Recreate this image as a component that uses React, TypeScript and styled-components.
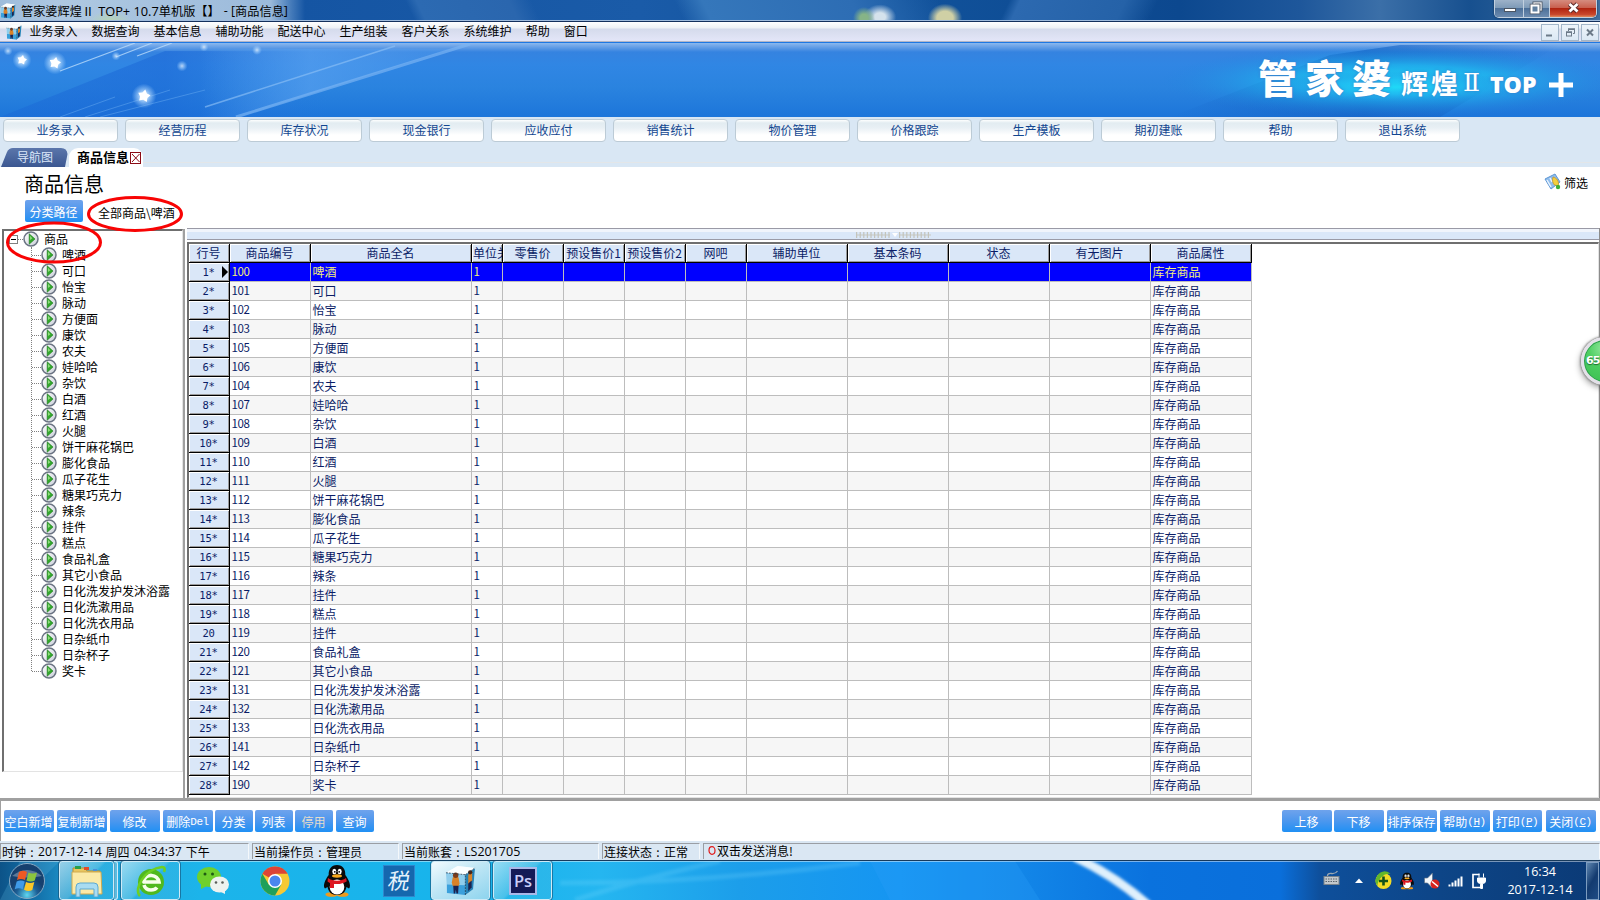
import React from "react";
import styled, { createGlobalStyle, css } from "styled-components";

const GlobalStyle = createGlobalStyle`
  * { box-sizing: border-box; }
  body { margin: 0; background: #fff; }
`;

const cjk = `"Noto Sans CJK SC", sans-serif`;
const ui = `"Open Sans", "Noto Sans CJK SC", sans-serif`;

const Screen = styled.div`
  position: relative;
  width: 1600px;
  height: 900px;
  overflow: hidden;
  display: flex;
  flex-direction: column;
  font: 12px/14px ${cjk};
  color: #000;
  white-space: nowrap;
`;

/* ---------- window frame ---------- */
const TitleBar = styled.header`
  height: 22px;
  flex: none;
  display: flex;
  align-items: flex-start;
  padding-right: 3px;
  border-bottom: 1px solid #14305c;
  box-shadow: inset 0 -1px 0 #9fbbdc;
  background:
    radial-gradient(ellipse 11px 11px at 864px 18px, #86b487 0 35%, transparent 100%),
    radial-gradient(ellipse 18px 14px at 880px 17px, #d5e2ec 0 30%, transparent 90%),
    radial-gradient(ellipse 18px 15px at 945px 18px, #cfd0a5 0 45%, transparent 95%),
    radial-gradient(ellipse 22px 10px at 110px 21px, rgba(190, 220, 160, .7), transparent 100%),
    linear-gradient(90deg, rgba(190, 212, 233, .8) 0, rgba(200, 219, 236, .85) 60px, rgba(190, 212, 233, .8) 270px, rgba(110, 155, 205, .5) 292px, transparent 305px),
    linear-gradient(65deg, transparent 376px, #2c6ab2 386px, #2a66ae 470px, transparent 490px),
    linear-gradient(65deg, transparent 620px, #3577bb 645px, #2d6db4 780px, transparent 860px),
    linear-gradient(115deg, transparent 915px, #2c69b0 925px, #2562a8 1020px, transparent 1050px),
    linear-gradient(90deg, #1b5fa5 0, #1555a3 300px, #1a5ba8 640px, #11529b 900px, #0c488f 1180px, #1e579b 1300px, #3b6fa8 1380px, #17508f 1470px, #406f9f 1600px);
`;
const TitleIcon = styled.div`
  width: 17px;
  margin-right: 4px;
  padding-top: 3px;
  height: 20px;
`;
const TitleText = styled.div`
  flex: 1;
  display: flex;
  font: 12.2px/20px ${cjk};
  padding-top: 1px;
`;
const Latin = styled.span<{ $size?: number; $left?: number }>`
  font-family: "Open Sans", sans-serif;
  font-size: ${(p) => p.$size ?? 12.5}px;
  margin-left: ${(p) => p.$left ?? 0}px;
`;
const Em = styled.span<{ $end?: boolean }>`
  width: 12.2px;
  display: flex;
  justify-content: ${(p) => (p.$end ? "flex-end" : "flex-start")};
  overflow: visible;
`;
const WinControls = styled.div`
  display: flex;
  height: 18px;
  border: 1px solid #c2d0df;
  border-top: 0;
  border-radius: 0 0 5px 5px;
  overflow: hidden;
  box-shadow: 0 0 2px #152a45;
`;
const WinButton = styled.div<{ $w: number; $close?: boolean }>`
  width: ${(p) => p.$w}px;
  display: flex;
  justify-content: center;
  background: ${(p) =>
    p.$close
      ? "linear-gradient(#d58c7f 0, #c9604e 45%, #b02410 50%, #c9472c 85%, #e08a5c)"
      : "linear-gradient(#9db2c9 0, #7f9bb8 45%, #4d7099 50%, #6d8cb0)"};
  & + & { border-left: 1px solid #c2d0df; }
`;
const MenuBar = styled.nav`
  height: 20px;
  flex: none;
  display: flex;
  align-items: center;
  padding: 0 1px 0 6px;
  background: linear-gradient(#fff 0, #eef1f5 6px, #d5dbec 7px, #e2e5f7 18px);
  border-bottom: 1px solid #b3b6c6;
  font: 12px/16px ${ui};
`;
const MenuIcon = styled.div`
  width: 18px;
  height: 16px;
  margin-right: 5.5px;
`;
const MenuItem = styled.span`
  margin-right: 14px;
`;
const MdiControls = styled.div`
  margin-left: auto;
  display: flex;
  gap: 2px;
  padding-top: 2px;
`;
const MdiButton = styled.div`
  width: 18px;
  height: 17px;
  border: 1px solid #a3b6c9;
  background: linear-gradient(#eef4fa, #dbe8f4);
  display: flex;
`;

/* ---------- banner ---------- */
const Banner = styled.section`
  height: 75px;
  flex: none;
  position: relative;
  border-top: 1px solid #1e78e4;
  background: linear-gradient(#8cb9ee 0, #6fa5e8 3px, #3583e0 9px, #3086e4 22px, #2a83df 45px, #1d76da 73px);
`;
const BannerArt = styled.svg`
  position: absolute;
  left: 0;
  top: 0;
`;
const Brand = styled.div`
  position: relative;
  height: 74px;
  padding-left: 1258px;
  display: flex;
  color: #fff;
  text-shadow: 0 0 3px #3c7ac8;
`;
const BrandPart = styled.span<{ $size: number; $top: number; $w: number; $gap?: number; $face?: string; $weight?: number }>`
  width: ${(p) => p.$w}px;
  font: ${(p) => p.$weight ?? 700} ${(p) => p.$size}px/${(p) => p.$size}px ${(p) => p.$face ?? cjk};
  margin-top: ${(p) => p.$top}px;
  letter-spacing: ${(p) => p.$gap ?? 0}px;
`;

/* ---------- shortcut band ---------- */
const Band = styled.section`
  height: 50px;
  flex: none;
  background: #d9e7f4;
  display: flex;
  flex-direction: column;
  justify-content: space-between;
`;
const Shortcuts = styled.div`
  display: flex;
  gap: 7px;
  padding: 2px 0 0 3px;
`;
const Shortcut = styled.div`
  width: 115px;
  height: 23px;
  border: 1px solid #bccbd6;
  border-radius: 4px;
  background: linear-gradient(#fdfefe 0, #e2ecf1 3px, #e9f0f5 8px, #fff 15px);
  color: #124690;
  text-align: center;
  line-height: 20px;
`;
const Tabs = styled.div`
  height: 19px;
  display: flex;
  padding-left: 1px;
`;
const InactiveTab = styled.div`
  width: 68px;
  position: relative;
  color: #dce8fa;
  text-align: center;
  line-height: 18px;
`;
const TabShape = styled.svg`
  position: absolute;
  left: 0;
  top: 0;
`;
const TabLabel = styled.span`
  position: relative;
`;
const ActiveTab = styled.div`
  width: 74px;
  display: flex;
  align-items: center;
  padding: 0 0 2px 8px;
  font-weight: 700;
  font-size: 13px;
  background: #fff;
  border-radius: 9px 9px 0 0;
`;
const TabClose = styled.svg`
  flex: none;
  margin: 2px 0 0 1px;
`;
const TabRest = styled.div`
  flex: 1;
  border-top: 1px solid #e3e6e8;
  margin-top: 14px;
`;

/* ---------- page head ---------- */
const PageHead = styled.section`
  height: 61px;
  flex: none;
  display: flex;
  justify-content: space-between;
  padding: 6px 11px 0 24px;
`;
const HeadLeft = styled.div`
  display: flex;
  flex-direction: column;
`;
const PageTitle = styled.h1`
  margin: 0;
  font: 400 20px/22px ${cjk};
  height: 27px;
`;
const PathRow = styled.div`
  display: flex;
  align-items: center;
  padding-left: 1px;
`;
const BlueButton = styled.button<{ $w: number; $ml?: number; $dim?: boolean }>`
  width: ${(p) => p.$w}px;
  height: 22px;
  margin: 0 0 0 ${(p) => p.$ml ?? 0}px;
  padding: 3px 1px 0 0;
  border: 0;
  border-radius: 2px;
  background: linear-gradient(#6fa3ec 0, #4c97ee 50%, #2090f4 100%);
  font: 12px/18px ${cjk};
  color: ${(p) => (p.$dim ? "#e5dccb" : "#fff")};
  text-align: center;
  white-space: nowrap;
  overflow: hidden;
  display: flex;
  align-items: flex-start;
  justify-content: center;
`;
const Hot = styled.span`
  font: 11px/19px "Liberation Mono", monospace;
  letter-spacing: -0.4px;
`;
const PathText = styled.span`
  margin-left: 15px;
  padding-top: 4px;
`;
const Filter = styled.div`
  display: flex;
  gap: 3px;
  padding-right: 1px;
  height: 20px;
  line-height: 20px;
`;

/* ---------- workspace ---------- */
const Workspace = styled.main`
  height: 573px;
  flex: none;
  display: flex;
  border-bottom: 3px solid #a0a0a0;
`;
const TreePane = styled.aside`
  width: 187px;
  padding: 1px 0 0 2px;
  border-right: 2px solid #fff;
  display: flex;
`;
const TreeColumn = styled.div`
  width: 181px;
`;
const TreeEdge = styled.div`
  width: 2px;
  background: #a0a0a0;
`;
const Tree = styled.div`
  height: 543px;
  border: 1px solid #e3e3e3;
  border-top: 2px solid #6f6f6f;
  border-left: 2px solid #6f6f6f;
`;
const TreeRoot = styled.div`
  height: 16px;
  display: flex;
  align-items: center;
  padding-left: 5px;
`;
const TreeChildren = styled.div`
  margin-left: 27px;
  height: 424px;
  border-left: 1px dotted #808080;
`;
const TreeItem = styled.div`
  height: 16px;
  display: flex;
  align-items: center;
`;
const Branch = styled.span<{ $w: number }>`
  width: ${(p) => p.$w}px;
  border-top: 1px dotted #808080;
`;
const NodeText = styled.span`
  margin-left: 5px;
  line-height: 16px;
`;
const GridPane = styled.div`
  flex: 1;
  min-width: 0;
  display: flex;
  flex-direction: column;
  border-right: 1px solid #8c8c8c;
`;
const Splitter = styled.div`
  height: 12px;
  display: flex;
  border-top: 1px solid #9a9aa6;
  border-bottom: 1px solid #9a9aa6;
  box-shadow: inset 0 3px 0 #f0f4fb;
  background: #dae7f8;
  padding: 3px 0 0 669px;
`;
const GridFrame = styled.div`
  margin-top: 2px;
  height: 556px;
  border: 1px solid #e3e3e3;
  border-top: 2px solid #6f6f6f;
  border-left: 2px solid #6f6f6f;
`;
const columns = "41px 81px 161px 31px 61px 61px 61px 61px 101px 101px 101px 101px 101px";
const bevel = css`
  background: #dae7f8;
  box-shadow: inset 1px 1px 0 #fff, inset -1px -1px 0 #9a9a9a;
  border-right: 1px solid #000;
  border-bottom: 1px solid #000;
`;
const HeaderRow = styled.div`
  display: grid;
  grid-template-columns: ${columns};
  height: 19px;
  width: 1063px;
`;
const HeaderCell = styled.div<{ $clip?: boolean }>`
  ${bevel}
  color: #0a1c66;
  text-align: ${(p) => (p.$clip ? "left" : "center")};
  padding: 0 ${(p) => (p.$clip ? 0 : 1)}px 0 ${(p) => (p.$clip ? 1 : 0)}px;
  line-height: 18px;
  overflow: hidden;
`;
const DataRow = styled.div<{ $on: boolean; $even: boolean }>`
  display: grid;
  grid-template-columns: ${columns};
  height: 19px;
  width: 1063px;
  color: ${(p) => (p.$on ? "#f3ee7a" : "#0a1c66")};
  background: ${(p) => (p.$on ? "#00f" : p.$even ? "#f6f6f6" : "#fff")};
`;
const RowNumber = styled.div`
  ${bevel}
  color: #0a1c66;
  font: 10.5px/18px "DejaVu Sans Mono", monospace;
  letter-spacing: -0.2px;
  display: grid;
  grid-template-columns: 9px 21px 10px;
  align-items: center;
  justify-items: center;
`;
const Cell = styled.div`
  border-right: 1px solid #bdbdbd;
  border-bottom: 1px solid #bdbdbd;
  padding-left: 1.5px;
  line-height: 17px;
  overflow: hidden;
`;
const NumCell = styled(Cell)`
  font-size: 11.5px;
  letter-spacing: -0.35px;
`;

/* ---------- footer ---------- */
const ButtonBar = styled.section`
  height: 40px;
  flex: none;
  display: flex;
  align-items: flex-start;
  padding: 9px 4px 0 3px;
  border-left: 1px solid #a0a0a0;
`;
const Push = styled.div`
  flex: 1;
`;
const StatusBar = styled.footer`
  height: 19px;
  flex: none;
  display: flex;
  gap: 3px;
  padding: 2px 0 1px;
  background: #dae7f3;
  font: 12px/15px ${cjk};
`;
const StatusPanel = styled.div<{ $w?: number; $plain?: boolean }>`
  ${(p) => (p.$w ? `width: ${p.$w}px` : "flex: 1")};
  border-top: 1px solid #9a9ea4;
  border-left: 1px solid #9a9ea4;
  border-right: 1px solid #f4f8fb;
  padding-left: ${(p) => (p.$plain ? 4 : 1)}px;
  line-height: ${(p) => (p.$plain ? 13 : 15)}px;
  display: flex;
  align-items: flex-start;
`;
const Colon = styled.span`
  width: 12px;
  text-align: center;
`;

/* ---------- taskbar ---------- */
const Taskbar = styled.footer`
  height: 40px;
  flex: none;
  position: relative;
  border-top: 1px solid #173a5c;
  background: linear-gradient(90deg, #0c5388 0, #1474ad 40px, #23a6dc 85px, #1cb4ea 200px, #17b4ec 480px, #25b6f0 600px, #1c9eea 740px, #1595f2 900px, #1286e8 1020px, #0a72de 1150px, #0a6fdb 1280px, #0e4f9b 1320px, #0d4587 1440px, #0b3a76 1600px);
`;
const TaskbarArt = styled.svg`
  position: absolute;
  left: 0;
  top: 0;
`;
const TaskbarRow = styled.div`
  position: relative;
  height: 39px;
  display: flex;
  align-items: stretch;
  box-shadow: inset 0 1px 0 rgba(255, 255, 255, .45);
`;
const TaskSlot = styled.div<{ $w: number; $ml?: number; $open?: boolean; $active?: boolean }>`
  width: ${(p) => p.$w}px;
  margin-left: ${(p) => p.$ml ?? 0}px;
  display: flex;
  align-items: center;
  justify-content: center;
  ${(p) =>
    p.$open &&
    css`
      border: 1px solid #cfeaf6;
      outline: 1px solid rgba(20, 70, 105, .55);
      outline-offset: -0.5px;
      border-radius: 3px;
      background: ${p.$active
        ? "linear-gradient(150deg, #f2fbfe, #bfe6f5 45%, #8dd4ee)"
        : "linear-gradient(135deg, rgba(205,238,248,.7), rgba(120,205,232,.5) 48%, rgba(60,185,228,.4) 52%)"};
    `}
`;
const StackEdge = styled.div`
  width: 4px;
  border: 1px solid #cfeaf6;
  border-left: 0;
  border-radius: 0 3px 3px 0;
  background: rgba(130, 200, 225, .6);
`;
const Tray = styled.div`
  margin-left: auto;
  display: flex;
  align-items: center;
`;
const Clock = styled.div`
  width: 84px;
  margin-left: 9px;
  color: #fff;
  font: 12.5px/18px ${ui};
  text-align: center;
`;
const ShowDesktop = styled.div`
  width: 13px;
  height: 38px;
  margin: 0 1px 0 4px;
  border: 1px solid #7c9cc0;
  background: linear-gradient(120deg, #5f86b0, #133b70 50%, #1f4c85);
`;

/* ---------- marks over the page ---------- */
const Marks = styled.svg`
  position: absolute;
  left: 0;
  top: 190px;
`;
const Ball = styled.div`
  position: absolute;
  left: 1581px;
  top: 337px;
  width: 48px;
  height: 48px;
  border-radius: 50%;
  border: 3px solid #e3e0e8;
  background: radial-gradient(circle at 45% 20%, #8fe59a 0, #4fcf63 35%, #39bd4e 100%);
  box-shadow: 0 0 2px 1px #8d8d8d, -1px 3px 6px rgba(0, 0, 0, .35), inset 0 0 0 1px #2c9a4c;
  color: #fff;
  font: 700 11px/42px "DejaVu Sans", sans-serif;
  padding-left: 2px;
  letter-spacing: -0.8px;
  text-shadow: 0 1px 1px #1d6b2c;
`;

/* ---------- drawings ---------- */
const CubeIcon = ({ size = 17 }: { size?: number }) => (
  <svg width={size} height={size} viewBox="0 0 32 32">
    <path d="M1 8 13 1 31 3 29 25 21 31 2 29Z" fill="#eaf6fc" />
    <path d="M1 8 21 10 21 31 2 29Z" fill="#8fcdec" />
    <path d="M2 20 21 21V31L2 29Z" fill="#3aa0dc" />
    <path d="M21 10 31 3 29 25 21 31Z" fill="#2583b8" />
    <path d="M1 8 13 1 31 3 21 10Z" fill="#fbfeff" />
    <path d="M8 13q3-3 6 0l1 6-1 3H8l-1-4Z" fill="#d98228" />
    <path d="M24 10l4-3v9l-4 4Z" fill="#d98228" />
    <path d="M8.500 21.500h5.500l-.5 8h-1.700l-.6-4-.7 4H9Z" fill="#1b2350" />
    <path d="M24 19l3.500-3v7L24 27Z" fill="#1b2350" />
    <circle cx="11" cy="10.500" r="2.800" fill="#7d3d1c" />
    <circle cx="26" cy="7.500" r="2.200" fill="#4a2414" />
    <path d="M1 8 21 10V31M21 10 31 3" fill="none" stroke="#16354c" strokeWidth=".8" strokeDasharray="2 1" />
  </svg>
);

const PlayIcon = () => (
  <svg width="16" height="16" viewBox="0 0 16 16">
    <defs>
      <linearGradient id="pl" x1="0" x2="1" y1="0" y2="1">
        <stop offset="0" stopColor="#fff" />
        <stop offset="1" stopColor="#c9ced8" />
      </linearGradient>
    </defs>
    <circle cx="8" cy="8" r="7" fill="url(#pl)" stroke="#6b7484" strokeWidth="1.500" />
    <path d="M6.200 2.800 12 8 6.200 13.200Z" fill="#33a82c" stroke="#1c7a1c" strokeWidth=".6" />
    <path d="M7 4.800 9.400 7.300 7 9Z" fill="#8fdc7c" />
  </svg>
);

const Penguin = ({ w, h }: { w: number; h: number }) => (
  <svg width={w} height={h} viewBox="0 0 28 32">
    <ellipse cx="8.500" cy="29.500" rx="6" ry="2.300" fill="#f09a1a" />
    <ellipse cx="19.500" cy="29.500" rx="6" ry="2.300" fill="#f09a1a" />
    <path d="M14 0C8 0 5.500 4.500 5.700 10 2 15 0 20 1.500 23c1 1 2-.5 3-1 1 5 4 8 9.500 8s8.500-3 9.500-8c1 .5 2 2 3 1C28 20 26 15 22.300 10 22.500 4.500 20 0 14 0Z" fill="#0a0a0a" />
    <ellipse cx="14" cy="22" rx="7.300" ry="7.500" fill="#fff" />
    <ellipse cx="11.300" cy="6.500" rx="2" ry="2.700" fill="#fff" />
    <ellipse cx="16.700" cy="6.500" rx="2" ry="2.700" fill="#fff" />
    <circle cx="11.800" cy="6.800" r=".9" />
    <circle cx="16.200" cy="6.800" r=".9" />
    <ellipse cx="14" cy="11" rx="5" ry="1.700" fill="#f7a81c" />
    <path d="M5 13c5 3.500 13 3.500 18 0l.8 3.300C19 20 9 20 4.500 16.500Z" fill="#dd1620" />
    <path d="M7 17.500h4v5.500H7z" fill="#dd1620" />
  </svg>
);

const shortcuts = ["业务录入", "经营历程", "库存状况", "现金银行", "应收应付", "销售统计", "物价管理", "价格跟踪", "生产模板", "期初建账", "帮助", "退出系统"];
const menus = ["业务录入", "数据查询", "基本信息", "辅助功能", "配送中心", "生产组装", "客户关系", "系统维护", "帮助", "窗口"];
const tree = ["啤酒", "可口", "怡宝", "脉动", "方便面", "康饮", "农夫", "娃哈哈", "杂饮", "白酒", "红酒", "火腿", "饼干麻花锅巴", "膨化食品", "瓜子花生", "糖果巧克力", "辣条", "挂件", "糕点", "食品礼盒", "其它小食品", "日化洗发护发沐浴露", "日化洗漱用品", "日化洗衣用品", "日杂纸巾", "日杂杯子", "奖卡"];
const heads = ["行号", "商品编号", "商品全名", "单位关", "零售价", "预设售价1", "预设售价2", "网吧", "辅助单位", "基本条码", "状态", "有无图片", "商品属性"];
const goods: [string, string][] = [
  ["100", "啤酒"], ["101", "可口"], ["102", "怡宝"], ["103", "脉动"], ["105", "方便面"], ["106", "康饮"], ["104", "农夫"],
  ["107", "娃哈哈"], ["108", "杂饮"], ["109", "白酒"], ["110", "红酒"], ["111", "火腿"], ["112", "饼干麻花锅巴"], ["113", "膨化食品"],
  ["114", "瓜子花生"], ["115", "糖果巧克力"], ["116", "辣条"], ["117", "挂件"], ["118", "糕点"], ["119", "挂件"], ["120", "食品礼盒"],
  ["121", "其它小食品"], ["131", "日化洗发护发沐浴露"], ["132", "日化洗漱用品"], ["133", "日化洗衣用品"], ["141", "日杂纸巾"],
  ["142", "日杂杯子"], ["190", "奖卡"],
];
const stars: [number, number, number][] = [[22, 17, 5], [55, 20, 6], [144, 53, 6.5]];
const dots: [number, number, number][] = [[8, 8, 3], [116, 13, 3], [182, 23, 4], [204, 4, 3], [257, 7, 3.5]];

const starPath = (x: number, y: number, r: number) =>
  Array.from({ length: 10 }, (_, i) => {
    const a = (i * Math.PI) / 5 - Math.PI / 2 + 0.2;
    const q = i % 2 ? r * 0.6 : r;
    return `${(x + q * Math.cos(a)).toFixed(1)},${(y + q * Math.sin(a)).toFixed(1)}`;
  }).join(" ");

export default function App() {
  return (
    <>
      <GlobalStyle />
      <Screen>
        <TitleBar>
          <TitleIcon><CubeIcon size={16} /></TitleIcon>
          <TitleText>
            管家婆辉煌<Em>Ⅱ</Em><Latin $left={4} $size={12.8}>TOP+ 10.7</Latin>单机版<Em $end>【</Em><Em>】</Em>
            <Latin $left={4}>- [</Latin>商品信息<Latin>]</Latin>
          </TitleText>
          <WinControls>
            <WinButton $w={28}>
              <svg width="27" height="17"><rect x="8.500" y="8.500" width="11" height="3" fill="#fff" stroke="#4b5563" /></svg>
            </WinButton>
            <WinButton $w={26}>
              <svg width="25" height="17">
                <rect x="10" y="3" width="7" height="7" fill="none" stroke="#4b5563" strokeWidth="3" />
                <rect x="10" y="3" width="7" height="7" fill="none" stroke="#fff" strokeWidth="1.300" />
                <rect x="7.500" y="5.500" width="7" height="7" fill="#5f7f9f" stroke="#4b5563" strokeWidth="3.500" />
                <rect x="7.500" y="5.500" width="7" height="7" fill="#5f7f9f" stroke="#fff" strokeWidth="2" />
              </svg>
            </WinButton>
            <WinButton $w={47} $close>
              <svg width="46" height="17">
                <path d="M19.500 4l8 7.500M27.500 4l-8 7.500" stroke="#5a2a2a" strokeWidth="4.600" />
                <path d="M19.500 4l8 7.500M27.500 4l-8 7.500" stroke="#fff" strokeWidth="2.800" />
              </svg>
            </WinButton>
          </WinControls>
        </TitleBar>

        <MenuBar>
          <MenuIcon><CubeIcon size={16} /></MenuIcon>
          {menus.map((m) => <MenuItem key={m}>{m}</MenuItem>)}
          <MdiControls>
            <MdiButton><svg width="16" height="15"><path d="M4 10.500h6" stroke="#6c7a88" strokeWidth="2" /></svg></MdiButton>
            <MdiButton>
              <svg width="16" height="15" fill="none" stroke="#6c7a88">
                <path d="M6.500 6V4.500h6v4H11" /><path d="M6 4h7" strokeWidth="1.500" /><rect x="4.500" y="7.500" width="5" height="3.500" /><path d="M4 7h6" strokeWidth="1.500" />
              </svg>
            </MdiButton>
            <MdiButton><svg width="16" height="15"><path d="M5 4.500l6 6M11 4.500l-6 6" stroke="#6c7a88" strokeWidth="2" /></svg></MdiButton>
          </MdiControls>
        </MenuBar>

        <Banner>
          <BannerArt width="1600" height="74">
            <defs>
              <radialGradient id="glow"><stop offset="0" stopColor="#1fd9f7" /><stop offset=".45" stopColor="#20bdf2" stopOpacity=".75" /><stop offset="1" stopColor="#2083dd" stopOpacity="0" /></radialGradient>
              <radialGradient id="halo"><stop offset="0" stopColor="#fff" /><stop offset=".4" stopColor="#bfe0ff" stopOpacity=".75" /><stop offset="1" stopColor="#9fd0ff" stopOpacity="0" /></radialGradient>
              <linearGradient id="dark" x1="0" x2="1"><stop offset="0" stopColor="#1a66d6" stopOpacity=".4" /><stop offset=".5" stopColor="#1a66d6" stopOpacity=".55" /><stop offset="1" stopColor="#2a78e0" stopOpacity="0" /></linearGradient>
              <linearGradient id="beam" gradientUnits="userSpaceOnUse" x1="200" x2="420" y1="0" y2="0"><stop offset="0" stopColor="#5aa2f0" stopOpacity="0" /><stop offset=".5" stopColor="#5aa2f0" stopOpacity=".65" /><stop offset="1" stopColor="#5aa2f0" stopOpacity=".35" /></linearGradient>
              <linearGradient id="shade" x1="0" x2="1"><stop offset="0" stopColor="#1561c4" stopOpacity="0" /><stop offset=".5" stopColor="#1561c4" stopOpacity=".7" /><stop offset="1" stopColor="#1561c4" stopOpacity="0" /></linearGradient>
            </defs>
            <path d="M0 74 165 8H330V74Z" fill="url(#dark)" />
            <path d="M190 74V6H450L240 74Z" fill="url(#beam)" />
            <path d="M205 64 395 3" stroke="#8cc0f6" strokeWidth="1.500" opacity=".65" />
            <path d="M236 74 470 1" stroke="#7db6f4" strokeWidth="3" opacity=".65" />
            <path d="M60 28 135 0M116 14 152 0M137 13 172 0" stroke="#b9dbfb" strokeWidth="1.200" opacity=".8" />
            <path d="M60 74 115 54M85 74 170 47M100 74 205 47" stroke="#6fb0f2" opacity=".45" />
            <path d="M1170 74 1330 12 1400 2H1560L1440 74Z" fill="url(#shade)" />
            <ellipse cx="1395" cy="38" rx="235" ry="36" fill="url(#glow)" />
            <ellipse cx="1395" cy="44" rx="130" ry="16" fill="url(#glow)" />
            {dots.map(([x, y, r]) => <circle key={x} cx={x} cy={y} r={r + 1.500} fill="url(#halo)" opacity=".7" />)}
            {stars.map(([x, y, r]) => (
              <g key={x}><circle cx={x} cy={y} r={r * 1.900} fill="url(#halo)" /><polygon points={starPath(x, y, r)} fill="#fff" /></g>
            ))}
          </BannerArt>
          <Brand>
            <BrandPart $size={39} $top={14} $w={143} $gap={8} $weight={900}>管家婆</BrandPart>
            <BrandPart $size={27} $top={26} $w={62} $gap={3}>辉煌</BrandPart>
            <BrandPart $size={25} $top={27} $w={27} $face={`"DejaVu Serif", serif`} $weight={400}>Ⅱ</BrandPart>
            <BrandPart $size={23} $top={30} $w={50} $face={`"Open Sans", sans-serif`} $weight={800}>TOP</BrandPart>
            <svg width="40" height="74"><path d="M9 42h24M21 30v24" stroke="#fff" strokeWidth="5" /></svg>
          </Brand>
        </Banner>

        <Band>
          <Shortcuts>{shortcuts.map((s) => <Shortcut key={s}>{s}</Shortcut>)}</Shortcuts>
          <Tabs>
            <InactiveTab>
              <TabShape width="68" height="19">
                <defs><linearGradient id="tb" x1="0" x2="0" y1="0" y2="1"><stop offset="0" stopColor="#5b76ab" /><stop offset="1" stopColor="#3b5791" /></linearGradient></defs>
                <path d="M0 19 6 4Q8 0 12 0H60Q66 0 66.500 6L64 19Z" fill="url(#tb)" />
              </TabShape>
              <TabLabel>导航图</TabLabel>
            </InactiveTab>
            <ActiveTab>
              商品信息
              <TabClose width="12" height="12"><rect x=".5" y=".5" width="10" height="11" fill="#fff" stroke="#8b0a14" /><path d="M2 2l7.500 8M9.500 2 2 10" stroke="#8b0a14" /></TabClose>
            </ActiveTab>
            <TabRest />
          </Tabs>
        </Band>

        <PageHead>
          <HeadLeft>
            <PageTitle>商品信息</PageTitle>
            <PathRow>
              <BlueButton $w={58}>分类路径</BlueButton>
              <PathText>全部商品\啤酒</PathText>
            </PathRow>
          </HeadLeft>
          <Filter>
            <svg width="17" height="17" viewBox="0 0 17 17">
              <path d="M1 6 11 1l5 8-9 7Z" fill="#8fbdec" stroke="#5f97d4" />
              <path d="M3 7l4 7M6 5l2 4" stroke="#e9f4ff" strokeWidth="1.500" />
              <path d="M9 4c4 1 6 4 5.500 9l-4-1C8.500 10 8 7 9 4Z" fill="#f3cf3f" stroke="#c58f1c" strokeWidth=".7" />
              <circle cx="14" cy="14" r="2.200" fill="#3fae3a" />
            </svg>
            筛选
          </Filter>
        </PageHead>

        <Workspace>
          <TreePane>
            <TreeColumn>
              <Tree>
                <TreeRoot>
                  <svg width="9" height="9"><rect x=".5" y=".5" width="8" height="8" fill="#fff" stroke="#808080" /><path d="M2 4.500h5" stroke="#000" /></svg>
                  <Branch $w={5} />
                  <PlayIcon />
                  <NodeText>商品</NodeText>
                </TreeRoot>
                <TreeChildren>
                  {tree.map((t) => (
                    <TreeItem key={t}><Branch $w={9} /><PlayIcon /><NodeText>{t}</NodeText></TreeItem>
                  ))}
                </TreeChildren>
              </Tree>
            </TreeColumn>
            <TreeEdge />
          </TreePane>
          <GridPane>
            <Splitter>
              <svg width="76" height="6">
                <path d="M0 3h34M43 3h32" stroke="#c9c9c0" /><path d="M0 3h34M43 3h32" stroke="#c4c4bb" strokeWidth="6" strokeDasharray="1.200 2.400" />
                <path d="M36 1h6l-3 4Z" fill="#fff" />
              </svg>
            </Splitter>
            <GridFrame>
              <HeaderRow>{heads.map((h, i) => <HeaderCell key={h} $clip={i === 3}>{h}</HeaderCell>)}</HeaderRow>
              {goods.map(([code, name], i) => (
                <DataRow key={code} $on={i === 0} $even={i % 2 === 1}>
                  <RowNumber>
                    <span />
                    <span>{i + 1}{i === 19 ? "" : "*"}</span>
                    {i === 0 ? <svg width="7" height="12"><path d="M1 0 7 6 1 12Z" /></svg> : <span />}
                  </RowNumber>
                  <NumCell>{code}</NumCell>
                  <Cell>{name}</Cell>
                  <NumCell>1</NumCell>
                  {heads.slice(4, 12).map((h) => <Cell key={h} />)}
                  <Cell>库存商品</Cell>
                </DataRow>
              ))}
            </GridFrame>
          </GridPane>
        </Workspace>

        <ButtonBar>
          <BlueButton $w={50}>空白新增</BlueButton>
          <BlueButton $w={50} $ml={3}>复制新增</BlueButton>
          <BlueButton $w={50} $ml={3}>修改</BlueButton>
          <BlueButton $w={50} $ml={3}>删除<Hot>Del</Hot></BlueButton>
          <BlueButton $w={38} $ml={2}>分类</BlueButton>
          <BlueButton $w={38} $ml={2}>列表</BlueButton>
          <BlueButton $w={38} $ml={2} $dim>停用</BlueButton>
          <BlueButton $w={38} $ml={3}>查询</BlueButton>
          <Push />
          <BlueButton $w={50}>上移</BlueButton>
          <BlueButton $w={50} $ml={2}>下移</BlueButton>
          <BlueButton $w={50} $ml={3}>排序保存</BlueButton>
          <BlueButton $w={50} $ml={3}>帮助<Hot>(<u>H</u>)</Hot></BlueButton>
          <BlueButton $w={49} $ml={3}>打印<Hot>(<u>P</u>)</Hot></BlueButton>
          <BlueButton $w={50} $ml={4}>关闭<Hot>(<u>C</u>)</Hot></BlueButton>
        </ButtonBar>

        <StatusBar>
          <StatusPanel $w={249}>时钟<Colon>:</Colon><Latin $size={12.2}>2017-12-14</Latin><Latin $left={4} />周四<Latin $left={4} $size={12.2}>04:34:37</Latin><Latin $left={4} />下午</StatusPanel>
          <StatusPanel $w={147}>当前操作员<Colon>:</Colon>管理员</StatusPanel>
          <StatusPanel $w={197}>当前账套<Colon>:</Colon><Latin>LS201705</Latin></StatusPanel>
          <StatusPanel $w={98}>连接状态<Colon>:</Colon>正常</StatusPanel>
          <StatusPanel $plain>
            <svg width="9" height="14"><ellipse cx="4" cy="6.500" rx="3" ry="3.800" fill="none" stroke="#e01818" strokeWidth="1.200" /></svg>
            双击发送消息!
          </StatusPanel>
        </StatusBar>

        <Taskbar>
          <TaskbarArt width="1600" height="39">
            <defs>
              <filter id="soft"><feGaussianBlur stdDeviation="1.500" /></filter>
            </defs>
            <path d="M560 22Q700 22 860 2M575 39Q640 18 720 0" fill="none" stroke="#7fdcff" strokeWidth="5" opacity=".22" filter="url(#soft)" />
            <path d="M870 0h145l25 39H890Z" fill="#2ba0f8" opacity=".3" />
            <path d="M1075 -4Q1115 15 1148 44" fill="none" stroke="#dff0fc" strokeWidth="9" filter="url(#soft)" />
            <path d="M20 0 60 0 20 39H0Z" fill="#5db4dc" opacity=".25" />
          </TaskbarArt>
          <TaskbarRow>
            <TaskSlot $w={38} $ml={8}>
              <svg width="38" height="38" viewBox="0 0 38 38">
                <defs><radialGradient id="orb" cy=".9"><stop offset="0" stopColor="#5fd7f0" /><stop offset=".6" stopColor="#1c5f96" /><stop offset="1" stopColor="#16406e" /></radialGradient></defs>
                <circle cx="19" cy="19" r="17.500" fill="url(#orb)" stroke="#86a9c4" />
                <path d="M4 14Q19 2 34 14 19 17 4 14Z" fill="#fff" opacity=".3" />
                <path d="M11 10q4-2.500 8 0l-2 8q-4-2-8 0Z" fill="#ee5a24" />
                <path d="M20.500 10.500q4 2 8.500 0l-2.200 8q-4 2-8.300 0Z" fill="#8cc63e" />
                <path d="M8.700 19.500q4-2 8 0l-2 7.800q-4-2-8 0Z" fill="#3f9be8" />
                <path d="M18 20q4 2 8.300 0l-2 8q-4 2-8.300-.3Z" fill="#fbc727" />
              </svg>
            </TaskSlot>
            <TaskSlot $w={55} $ml={13} $open>
              <svg width="34" height="32" viewBox="0 0 34 32">
                <path d="M3 3h12l2 3h13v22H3Z" fill="#e9c65f" stroke="#b38d32" />
                <path d="M2 7h29l1 22H2Z" fill="#fbeaa8" stroke="#d0ab50" />
                <path d="M5 1h6v3H5z" fill="#27a04a" /><path d="M14 2h5v3h-5z" fill="#e04a2b" /><path d="M23 4h4v2h-4z" fill="#4a90d9" />
                <path d="M6 32V22q0-4 4-4h14q4 0 4 4v10h-4v-8H10v8Z" fill="#a9dcf2" stroke="#5fa9cf" />
              </svg>
            </TaskSlot>
            <StackEdge />
            <TaskSlot $w={59} $ml={3} $open>
              <svg width="32" height="32" viewBox="0 0 32 32">
                <circle cx="16" cy="17" r="13" fill="#4fb91d" />
                <path d="M9 17h15a8 8 0 0 0-15.500-1Zm0 3q1.500 5 7 5 4 0 6-2.500" fill="none" stroke="#f6ffe9" strokeWidth="3.600" />
                <path d="M5 31C-2 24 10 4 27 2q4 0 2 5" fill="none" stroke="#6fd022" strokeWidth="2.600" />
              </svg>
            </TaskSlot>
            <TaskSlot $w={34} $ml={16}>
              <svg width="32" height="28" viewBox="0 0 32 28">
                <ellipse cx="12" cy="10" rx="12" ry="10" fill="#6fd02c" /><path d="M4 16v6l6-3Z" fill="#6fd02c" />
                <circle cx="8" cy="7" r="1.500" fill="#205a12" /><circle cx="15.500" cy="7" r="1.500" fill="#205a12" />
                <ellipse cx="22.500" cy="17.500" rx="9.500" ry="8" fill="#eef2ef" /><path d="M28 22v5l-6-3Z" fill="#eef2ef" />
                <circle cx="19" cy="15.500" r="1.300" fill="#5a5f5a" /><circle cx="25.500" cy="15.500" r="1.300" fill="#5a5f5a" />
              </svg>
            </TaskSlot>
            <TaskSlot $w={30} $ml={30}>
              <svg width="30" height="30" viewBox="0 0 30 30">
                <circle cx="15" cy="15" r="14.500" fill="#f6c933" />
                <path d="M15 15 2.400 7.800A14.500 14.500 0 0 1 27.600 7.800H15Z" fill="#dc4437" />
                <path d="M2.400 7.800A14.500 14.500 0 0 0 15 29.500L21.300 18.600 15 15 8.700 18.600Z" fill="#1fa05a" />
                <circle cx="15" cy="15" r="7" fill="#fff" /><circle cx="15" cy="15" r="5.500" fill="#4a86ee" />
              </svg>
            </TaskSlot>
            <TaskSlot $w={28} $ml={33}><Penguin w={28} h={32} /></TaskSlot>
            <TaskSlot $w={32} $ml={32}>
              <svg width="32" height="32">
                <rect x=".5" y=".5" width="31" height="31" fill="#1567ae" stroke="#2f86cc" />
                <text x="19" y="23.500" fontSize="22" fontWeight="400" textAnchor="middle" fill="#e4f1fb" fontFamily="Noto Sans CJK SC" transform="skewX(-10)">税</text>
              </svg>
            </TaskSlot>
            <TaskSlot $w={59} $ml={16} $open $active><CubeIcon size={31} /></TaskSlot>
            <TaskSlot $w={59} $ml={3} $open>
              <svg width="28" height="28">
                <rect x="1" y="1" width="26" height="26" fill="#141a56" stroke="#a9b8e8" strokeWidth="2" />
                <text x="14" y="19.500" fontSize="16.500" fontWeight="600" textAnchor="middle" fill="#c9cdf8" fontFamily="Open Sans">Ps</text>
              </svg>
            </TaskSlot>
            <Tray>
              <svg width="170" height="39" viewBox="1319.500 0 170 39">
                <rect x="1324.500" y="15.500" width="15" height="8" fill="#c3c8cc" stroke="#79838c" />
                <path d="M1326 18h12M1326 20.500h12" stroke="#59636b" strokeDasharray="1.500 1" />
                <path d="M1328 15q0-3 4-2.500t6-2.500" fill="none" stroke="#9aa7b2" strokeWidth="1.300" />
                <path d="M1355.500 22 1359.500 17.500 1363.500 22Z" fill="#fff" />
                <circle cx="1384" cy="20" r="8" fill="#f2dc26" />
                <path d="M1378 14.500a8 8 0 0 1 13-1.500q-5-1-9 3t-4 9q-4-5 0-10.500Z" fill="#63b82b" />
                <path d="M1384 15.500v9M1379.500 20h9" stroke="#14531a" strokeWidth="2.600" />
                <g transform="translate(1399.500 11.500)"><Penguin w={16} h={17} /></g>
                <path d="M1425 17h3l5-5v15l-5-5h-3Z" fill="#f4f8fb" stroke="#5c7188" strokeWidth=".7" />
                <circle cx="1435.500" cy="23" r="4.500" fill="#d8231f" /><path d="M1432.500 20.500l6 5" stroke="#fff" strokeWidth="1.500" />
                <path d="M1450 25.500v-2M1453 25.500v-4M1456 25.500v-6M1459 25.500v-8M1462 25.500v-10" stroke="#fff" strokeWidth="2" />
                <path d="M1480 13.500h-6.500v13h8v-3" fill="none" stroke="#fff" strokeWidth="1.700" />
                <path d="M1478 17h8v3q0 2.500-3 2.500v5h-1.800v-5q-3.200 0-3.200-2.500ZM1479.500 12.500v4M1484 12.500v4" fill="#fff" stroke="#fff" />
              </svg>
              <Clock>16:34<br />2017-12-14</Clock>
              <ShowDesktop />
            </Tray>
          </TaskbarRow>
        </Taskbar>

        <Marks width="200" height="80">
          <ellipse cx="135" cy="24" rx="46.500" ry="16.500" fill="none" stroke="#f80404" strokeWidth="3" />
          <ellipse cx="54" cy="52.500" rx="46.500" ry="19.500" fill="none" stroke="#f80404" strokeWidth="3" />
        </Marks>
        <Ball>65</Ball>
      </Screen>
    </>
  );
}
